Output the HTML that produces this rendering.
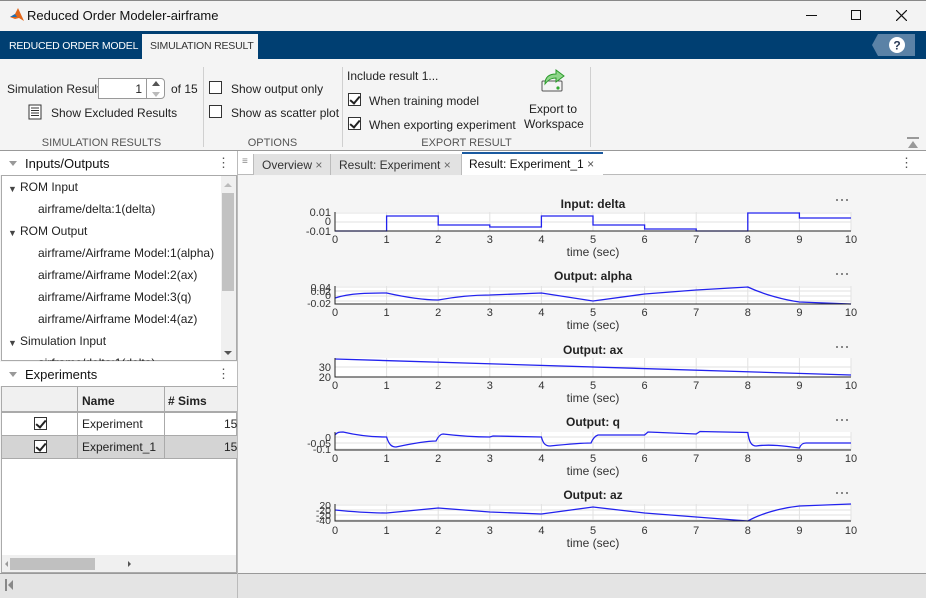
<!DOCTYPE html>
<html><head><meta charset="utf-8"><style>
*{box-sizing:border-box;margin:0;padding:0;white-space:nowrap}
body{width:926px;height:598px;overflow:hidden;font-family:"Liberation Sans",sans-serif;font-size:12px;color:#222;background:#f4f4f4;position:relative}
.a{position:absolute}
.cb{position:absolute;width:13px;height:13px;border:1px solid #333;background:#fff}
.cb.k::after{content:"";position:absolute;left:3px;top:0px;width:4px;height:8px;border:solid #222;border-width:0 2px 2px 0;transform:rotate(40deg)}
.sec{position:absolute;top:137px;font-size:11px;color:#555;text-align:center}
.tab{position:absolute;top:154px;height:21px;background:#e2e2e2;border-right:1px solid #bbb;font-size:12px;padding:4px 0 0 8px;color:#333}
.tr{position:absolute;font-size:12px;color:#222}
</style></head><body>
<div class="a" style="left:0;top:0;width:926px;height:31px;background:#f3f3f3;border-top:1px solid #888"></div>
<svg class="a" style="left:9px;top:7px" width="16" height="16" viewBox="0 0 16 16"><path d="M1 10 L6 7 L9 1 L15 14 L10 11 L6 12 Z" fill="#e0661b"/><path d="M1 10 L6 7 L8 10 Z" fill="#1b6fb5"/></svg>
<div class="a" style="left:27px;top:8px;font-size:13px;color:#111">Reduced Order Modeler-airframe</div>
<div class="a" style="left:806px;top:15px;width:11px;height:1px;background:#111"></div>
<div class="a" style="left:851px;top:10px;width:10px;height:10px;border:1px solid #111"></div>
<svg class="a" style="left:896px;top:10px" width="11" height="11"><path d="M0 0L11 11M11 0L0 11" stroke="#111" stroke-width="1.2"/></svg>
<div class="a" style="left:0;top:31px;width:926px;height:28px;background:#003f72"></div>
<div class="a" style="left:9px;top:40px;color:#fff;font-size:10.5px;letter-spacing:-0.2px">REDUCED ORDER MODEL</div>
<div class="a" style="left:142px;top:34px;width:116px;height:26px;background:#f4f4f4;font-size:10.5px;letter-spacing:-0.2px;padding:6px 0 0 8px;color:#333">SIMULATION RESULT</div>
<svg class="a" style="left:872px;top:34px" width="44" height="22"><path d="M6 0H43V22H6L0 11Z" fill="#5b82a6"/><circle cx="25" cy="11" r="8" fill="#fff"/><text x="25" y="15.5" font-size="12" font-weight="bold" text-anchor="middle" fill="#2a3a55" font-family="Liberation Sans">?</text></svg>
<div class="a" style="left:203px;top:67px;width:1px;height:80px;background:#d0d0d0"></div>
<div class="a" style="left:342px;top:67px;width:1px;height:80px;background:#d0d0d0"></div>
<div class="a" style="left:590px;top:67px;width:1px;height:80px;background:#d0d0d0"></div>
<div class="a" style="left:7px;top:82px;font-size:12px">Simulation Result</div>
<div class="a" style="left:98px;top:78px;width:48px;height:21px;background:#fff;border:1px solid #999;border-right:none;text-align:right;padding:3px 4px 0 0">1</div>
<div class="a" style="left:146px;top:78px;width:19px;height:21px;background:#fff;border:1px solid #999;border-radius:0 4px 4px 0"></div>
<div class="a" style="left:152px;top:81px;border:4px solid transparent;border-bottom:5px solid #555;border-top:none"></div>
<div class="a" style="left:152px;top:92px;border:4px solid transparent;border-top:5px solid #bbb;border-bottom:none"></div>
<div class="a" style="left:171px;top:82px">of 15</div>
<svg class="a" style="left:28px;top:104px" width="14" height="16"><rect x="1" y="1" width="12" height="14" fill="#fff" stroke="#333"/><path d="M3 4H11M3 6.5H11M3 9H11M3 11.5H11" stroke="#333"/></svg>
<div class="a" style="left:51px;top:106px">Show Excluded Results</div>
<div class="sec" style="left:0;width:203px">SIMULATION RESULTS</div>
<div class="cb" style="left:209px;top:81px"></div><div class="a" style="left:231px;top:82px">Show output only</div>
<div class="cb" style="left:209px;top:105px"></div><div class="a" style="left:231px;top:106px">Show as scatter plot</div>
<div class="sec" style="left:203px;width:139px">OPTIONS</div>
<div class="a" style="left:347px;top:69px">Include result 1...</div>
<div class="cb k" style="left:348px;top:93px"></div><div class="a" style="left:369px;top:94px">When training model</div>
<div class="cb k" style="left:348px;top:117px"></div><div class="a" style="left:369px;top:118px">When exporting experiment</div>
<div class="sec" style="left:343px;width:247px">EXPORT RESULT</div>
<svg class="a" style="left:540px;top:68px" width="26" height="26"><rect x="2" y="13" width="20" height="10" rx="1" fill="none" stroke="#555"/><circle cx="18" cy="20" r="1.6" fill="#3a3"/><path d="M5 16 C5 8 10 6 16 6 V2 L24 8 L16 14 V10 C11 10 8 12 5 16Z" fill="#8fd68a" stroke="#2a9a2a"/></svg>
<div class="a" style="left:524px;top:102px;width:58px;text-align:center;line-height:15px;white-space:normal">Export to Workspace</div>
<svg class="a" style="left:907px;top:137px" width="12" height="11"><path d="M0 1H12" stroke="#999" stroke-width="2"/><path d="M1 11L6 4L11 11Z" fill="#999"/></svg>
<div class="a" style="left:0;top:150px;width:926px;height:1px;background:#999"></div>
<div class="a" style="left:0;top:151px;width:237px;height:24px;background:#fff"></div>
<div class="a" style="left:9px;top:161px;border:4px solid transparent;border-top:5px solid #999;border-bottom:none"></div>
<div class="a" style="left:25px;top:156px;font-size:13px;color:#111">Inputs/Outputs</div>
<div class="a" style="left:217px;top:155px;font-size:13px;color:#555">⋮</div>
<div class="a" style="left:1px;top:175px;width:236px;height:186px;background:#fff;border:1px solid #aaa"></div>
<div class="a" style="left:221px;top:176px;width:15px;height:184px;background:#f0f0f0"></div>
<div class="a" style="left:222px;top:193px;width:12px;height:98px;background:#c2c2c2"></div>
<div class="a" style="left:224px;top:183px;border:4px solid transparent;border-bottom:4px solid #bbb;border-top:none"></div>
<div class="a" style="left:224px;top:351px;border:4px solid transparent;border-top:4px solid #555;border-bottom:none"></div>
<div class="a" style="left:0;top:175px;width:221px;height:186px;overflow:hidden">
<div class="tr" style="left:8px;top:9px;font-size:9px;color:#444">▼</div><div class="tr" style="left:20px;top:5px">ROM Input</div>
<div class="tr" style="left:38px;top:27px">airframe/delta:1(delta)</div>
<div class="tr" style="left:8px;top:53px;font-size:9px;color:#444">▼</div><div class="tr" style="left:20px;top:49px">ROM Output</div>
<div class="tr" style="left:38px;top:71px">airframe/Airframe Model:1(alpha)</div>
<div class="tr" style="left:38px;top:93px">airframe/Airframe Model:2(ax)</div>
<div class="tr" style="left:38px;top:115px">airframe/Airframe Model:3(q)</div>
<div class="tr" style="left:38px;top:137px">airframe/Airframe Model:4(az)</div>
<div class="tr" style="left:8px;top:163px;font-size:9px;color:#444">▼</div><div class="tr" style="left:20px;top:159px">Simulation Input</div>
<div class="tr" style="left:38px;top:181px">airframe/delta:1(delta)</div>
</div>
<div class="a" style="left:0;top:362px;width:237px;height:24px;background:#fff"></div>
<div class="a" style="left:9px;top:372px;border:4px solid transparent;border-top:5px solid #999;border-bottom:none"></div>
<div class="a" style="left:25px;top:367px;font-size:13px;color:#111">Experiments</div>
<div class="a" style="left:217px;top:366px;font-size:13px;color:#555">⋮</div>
<div class="a" style="left:1px;top:386px;width:236px;height:187px;background:#fff;border:1px solid #aaa"></div>
<div class="a" style="left:2px;top:387px;width:235px;height:25px;background:#f0f0f0;border-bottom:1px solid #aaa"></div>
<div class="a" style="left:2px;top:435px;width:235px;height:23px;background:#d4d4d4"></div>
<div class="a" style="left:2px;top:412px;width:235px;height:1px;background:#aaa"></div>
<div class="a" style="left:2px;top:435px;width:235px;height:1px;background:#aaa"></div>
<div class="a" style="left:2px;top:458px;width:235px;height:1px;background:#aaa"></div>
<div class="a" style="left:77px;top:387px;width:1px;height:71px;background:#aaa"></div>
<div class="a" style="left:164px;top:387px;width:1px;height:71px;background:#aaa"></div>
<div class="a" style="left:82px;top:394px;font-weight:bold">Name</div>
<div class="a" style="left:168px;top:394px;font-weight:bold"># Sims</div>
<div class="cb k" style="left:34px;top:417px"></div><div class="a" style="left:82px;top:417px">Experiment</div><div class="a" style="left:224px;top:417px">15</div>
<div class="cb k" style="left:34px;top:440px"></div><div class="a" style="left:82px;top:440px">Experiment_1</div><div class="a" style="left:224px;top:440px">15</div>
<div class="a" style="left:2px;top:555px;width:234px;height:17px;background:#f0f0f0"></div>
<div class="a" style="left:10px;top:558px;width:85px;height:12px;background:#c0c0c0"></div>
<div class="a" style="left:5px;top:561px;border:3px solid transparent;border-right:3px solid #999;border-left:none"></div>
<div class="a" style="left:128px;top:561px;border:3px solid transparent;border-left:3px solid #555;border-right:none"></div>
<div class="a" style="left:237px;top:151px;width:689px;height:24px;background:#fff;border-bottom:1px solid #bbb"></div>
<div class="a" style="left:237px;top:151px;width:1px;height:422px;background:#bbb"></div>
<div class="a" style="left:242px;top:156px;color:#888;font-size:10px">≡</div>
<div class="tab" style="left:253px;width:78px;border-left:1px solid #bbb">Overview <span style="color:#666">×</span></div>
<div class="tab" style="left:331px;width:131px">Result: Experiment <span style="color:#666">×</span></div>
<div class="a" style="left:462px;top:152px;width:141px;height:23px;background:#fff;border-top:2px solid #1a5aa0;padding:3px 0 0 7px;color:#111">Result: Experiment_1 <span style="color:#555">×</span></div>
<div class="a" style="left:900px;top:155px;font-size:13px;color:#555">⋮</div>
<div class="a" style="left:238px;top:176px;width:688px;height:397px;background:#f5f5f5"></div>
<div class="a" style="left:0;top:573px;width:926px;height:25px;background:#e4e4e4;border-top:1px solid #999"></div>
<div class="a" style="left:237px;top:573px;width:1px;height:25px;background:#bbb"></div>
<div class="a" style="left:5px;top:579px;width:2px;height:12px;background:#888"></div>
<div class="a" style="left:8px;top:580px;border:5px solid transparent;border-right:5px solid #888;border-left:none"></div>
<svg class="a" style="left:0;top:0" width="926" height="598" font-family="Liberation Sans" font-size="11" fill="#333">
<defs>
<g id="vg" stroke="#e2e2e2" stroke-width="1"><path d="M386.6 0V20M438.2 0V20M489.8 0V20M541.4 0V20M593 0V20M644.6 0V20M696.2 0V20M747.8 0V20M799.4 0V20M851 0V20"/></g>
<g id="xl" text-anchor="middle"><text x="335">0</text><text x="386.6">1</text><text x="438.2">2</text><text x="489.8">3</text><text x="541.4">4</text><text x="593">5</text><text x="644.6">6</text><text x="696.2">7</text><text x="747.8">8</text><text x="799.4">9</text><text x="851">10</text><text x="593" y="13" font-size="12">time (sec)</text></g>
<g id="dots" fill="#666"><circle cx="0" cy="0" r="1"/><circle cx="5" cy="0" r="1"/><circle cx="10" cy="0" r="1"/></g>
</defs>
<text x="593" y="208" font-size="12" font-weight="bold" text-anchor="middle" fill="#222">Input: delta</text>
<use href="#dots" transform="translate(837,200)"/>
<rect x="335" y="212" width="516" height="19" fill="#fff"/>
<use href="#vg" transform="translate(0,212) scale(1,0.95)"/>
<path d="M335 222H851M335 213H851" stroke="#e2e2e2"/>
<path d="M335 231H386.6V216H438.2V225H489.8V227H541.4V216H593V225H644.6V229H696.2V231H747.8V213H799.4V218H851" fill="none" stroke="#2222ee" stroke-width="1.3"/>
<path d="M335 212V231H851" fill="none" stroke="#222"/>
<g text-anchor="end"><text x="331" y="216">0.01</text><text x="331" y="225">0</text><text x="331" y="235">-0.01</text></g>
<use href="#xl" transform="translate(0,243)"/>
<text x="593" y="280" font-size="12" font-weight="bold" text-anchor="middle" fill="#222">Output: alpha</text>
<use href="#dots" transform="translate(837,274)"/>
<rect x="335" y="286" width="516" height="18" fill="#fff"/>
<use href="#vg" transform="translate(0,286) scale(1,0.9)"/>
<path d="M335 287H851M335 291H851M335 296H851M335 301H851" stroke="#e2e2e2"/>
<path d="M335 298C350 293 370 293 386.6 293C400 296 420 300 438.2 300C460 296 480 295 489.8 295L541.4 293L593 301L644.6 294L696.2 290L747.8 287C765 295 785 300 799.4 302L851 304" fill="none" stroke="#2222ee" stroke-width="1.3"/>
<path d="M335 286V304H851" fill="none" stroke="#222"/>
<g text-anchor="end" font-size="10.5"><text x="331" y="291">0.04</text><text x="331" y="295">0.02</text><text x="331" y="299">0</text><text x="331" y="307">-0.02</text></g>
<use href="#xl" transform="translate(0,316)"/>
<text x="593" y="354" font-size="12" font-weight="bold" text-anchor="middle" fill="#222">Output: ax</text>
<use href="#dots" transform="translate(837,347)"/>
<rect x="335" y="358" width="516" height="19" fill="#fff"/>
<use href="#vg" transform="translate(0,358) scale(1,0.95)"/>
<path d="M335 367H851" stroke="#e2e2e2"/>
<path d="M335 359L851 375" fill="none" stroke="#2222ee" stroke-width="1.3"/>
<path d="M335 358V377H851" fill="none" stroke="#222"/>
<g text-anchor="end"><text x="331" y="371">30</text><text x="331" y="381">20</text></g>
<use href="#xl" transform="translate(0,389)"/>
<text x="593" y="426" font-size="12" font-weight="bold" text-anchor="middle" fill="#222">Output: q</text>
<use href="#dots" transform="translate(837,420)"/>
<rect x="335" y="432" width="516" height="18" fill="#fff"/>
<use href="#vg" transform="translate(0,432) scale(1,0.9)"/>
<path d="M335 437H851M335 443H851M335 449H851" stroke="#e2e2e2"/>
<path d="M335 435C337 432 340 432 343 432C360 436 375 437 386.6 437C389 445 392 447 396 447C410 444 425 441 436 441C438 437 440 434 443 434C460 436 475 437 489.8 437L493 436L541.4 437C543 443 545 446 550 446C570 444 585 443 591 443C593 438 595 436 598 435L644.6 435L648 432L696.2 434L700 431.5L747.8 432.5C749 441 751 446 756 446C770 444 785 446 799.4 448C801 444 803 443 806 443L851 443" fill="none" stroke="#2222ee" stroke-width="1.3"/>
<path d="M335 432V450H851" fill="none" stroke="#222"/>
<g text-anchor="end" font-size="10.5"><text x="331" y="441">0</text><text x="331" y="447">-0.05</text><text x="331" y="453">-0.1</text></g>
<use href="#xl" transform="translate(0,462)"/>
<text x="593" y="499" font-size="12" font-weight="bold" text-anchor="middle" fill="#222">Output: az</text>
<use href="#dots" transform="translate(837,493)"/>
<rect x="335" y="504" width="516" height="17" fill="#fff"/>
<use href="#vg" transform="translate(0,504) scale(1,0.85)"/>
<path d="M335 505H851M335 510H851M335 515H851M335 520H851" stroke="#e2e2e2"/>
<path d="M335 510C355 512 370 513 386.6 513L438.2 508L489.8 512L541.4 514L593 507L644.6 513L696.2 517L747.8 521C760 514 780 508 799.4 506L851 504" fill="none" stroke="#2222ee" stroke-width="1.3"/>
<path d="M335 504V521H851" fill="none" stroke="#222"/>
<g text-anchor="end" font-size="10.5"><text x="331" y="509">20</text><text x="331" y="514">-20</text><text x="331" y="519">-20</text><text x="331" y="524">-40</text></g>
<use href="#xl" transform="translate(0,534)"/>
</svg>
</body></html>
